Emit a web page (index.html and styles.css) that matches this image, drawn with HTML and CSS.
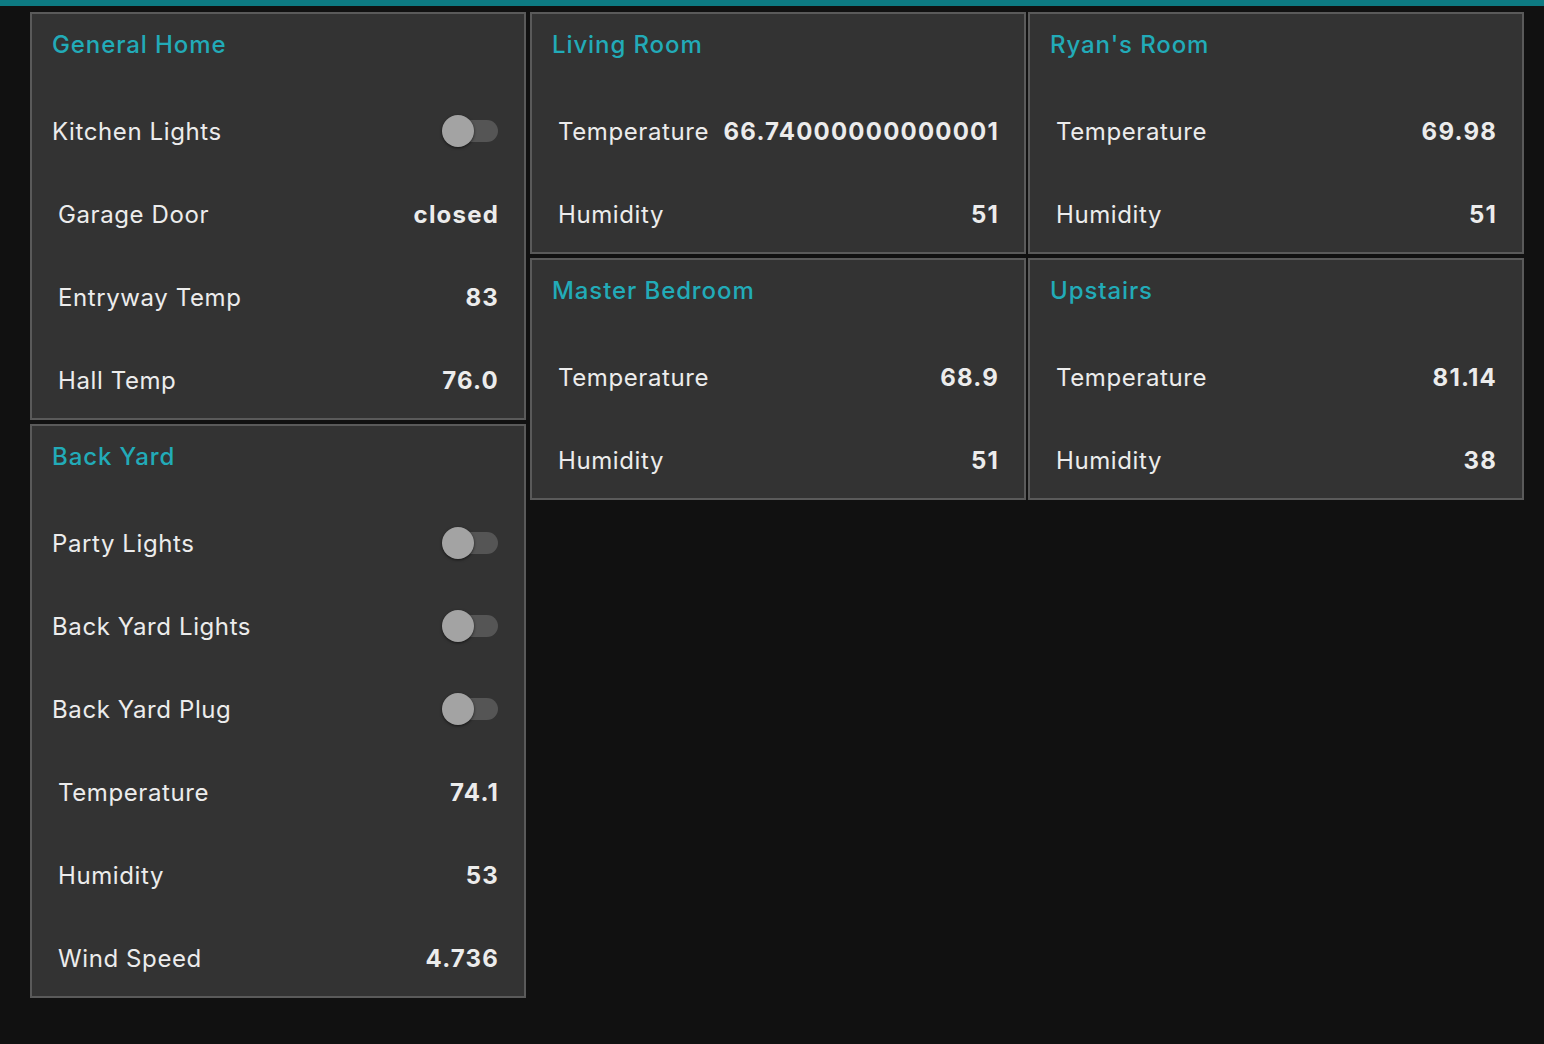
FILE: index.html
```html
<!DOCTYPE html>
<html lang="en">
<head>
  <meta charset="UTF-8">
  <meta name="viewport" content="width=device-width, initial-scale=1.0">
  <title>Home Dashboard</title>
  <link rel="stylesheet" href="styles.css">
</head>
<body>

  <div class="topbar"></div>

  <div class="layout">

    <!-- First column: house-wide group and back yard -->
    <div class="column">
      <div class="card">
        <div class="card-title">General Home</div>
        <div class="row switch-row">
          <span class="label">Kitchen Lights</span>
          <span class="switch"><span class="track"></span><span class="thumb"></span></span>
        </div>
        <div class="row text-row">
          <span class="label">Garage Door</span>
          <span class="value">closed</span>
        </div>
        <div class="row text-row">
          <span class="label">Entryway Temp</span>
          <span class="value">83</span>
        </div>
        <div class="row text-row">
          <span class="label">Hall Temp</span>
          <span class="value">76.0</span>
        </div>
      </div>

      <div class="card">
        <div class="card-title">Back Yard</div>
        <div class="row switch-row">
          <span class="label">Party Lights</span>
          <span class="switch"><span class="track"></span><span class="thumb"></span></span>
        </div>
        <div class="row switch-row">
          <span class="label">Back Yard Lights</span>
          <span class="switch"><span class="track"></span><span class="thumb"></span></span>
        </div>
        <div class="row switch-row">
          <span class="label">Back Yard Plug</span>
          <span class="switch"><span class="track"></span><span class="thumb"></span></span>
        </div>
        <div class="row text-row">
          <span class="label">Temperature</span>
          <span class="value">74.1</span>
        </div>
        <div class="row text-row">
          <span class="label">Humidity</span>
          <span class="value">53</span>
        </div>
        <div class="row text-row">
          <span class="label">Wind Speed</span>
          <span class="value">4.736</span>
        </div>
      </div>
    </div>

    <div class="column col-mid">
      <div class="card">
        <div class="card-title">Living Room</div>
        <div class="row text-row">
          <span class="label">Temperature</span>
          <span class="value">66.74000000000001</span>
        </div>
        <div class="row text-row">
          <span class="label">Humidity</span>
          <span class="value">51</span>
        </div>
      </div>

      <div class="card">
        <div class="card-title">Master Bedroom</div>
        <div class="row text-row">
          <span class="label">Temperature</span>
          <span class="value">68.9</span>
        </div>
        <div class="row text-row">
          <span class="label">Humidity</span>
          <span class="value">51</span>
        </div>
      </div>
    </div>

    <div class="column col-right">
      <div class="card">
        <div class="card-title">Ryan's Room</div>
        <div class="row text-row">
          <span class="label">Temperature</span>
          <span class="value">69.98</span>
        </div>
        <div class="row text-row">
          <span class="label">Humidity</span>
          <span class="value">51</span>
        </div>
      </div>

      <div class="card">
        <div class="card-title">Upstairs</div>
        <div class="row text-row">
          <span class="label">Temperature</span>
          <span class="value">81.14</span>
        </div>
        <div class="row text-row">
          <span class="label">Humidity</span>
          <span class="value">38</span>
        </div>
      </div>
    </div>

  </div>

</body>
</html>
```

FILE: styles.css
```css
body {
  font-family: 'Inter', 'Noto Sans', sans-serif;
  background-color: #111111;
  color: #ececec;
  margin: 0;
  padding: 0;
  min-height: 100vh;
}

.topbar {
  height: 6px;
  background-color: #0d7a82;
}

.layout {
  display: flex;
  align-items: flex-start;
  padding: 6px 0 0 30px;
}

.column {
  display: flex;
  flex-direction: column;
  gap: 4px;
  width: 496px;
}

.col-mid {
  margin-left: 4px;
}

.col-right {
  margin-left: 2px;
}

.card {
  box-sizing: border-box;
  background-color: #333333;
  border: 2px solid #5a5a5a;
  padding: 0 0 1px;
  display: flex;
  flex-direction: column;
  gap: 9px;
}

.card-title {
  height: 62px;
  line-height: 62px;
  padding-left: 20px;
  margin-bottom: 9px;
  font-size: 24px;
  font-weight: 500;
  letter-spacing: 0.9px;
  color: #22abb8;
}

.row {
  height: 74px;
  display: flex;
  align-items: center;
  justify-content: space-between;
  padding: 0 26px 0 20px;
  font-size: 24px;
}

.label {
  letter-spacing: 0.6px;
}

.text-row .label {
  padding-left: 6px;
}

.value {
  font-weight: 700;
  letter-spacing: 1.2px;
  padding-left: 12px;
  margin-right: -1px;
}

/* toggle switch, off state */
.switch {
  position: relative;
  width: 56px;
  height: 32px;
}

.switch .track {
  position: absolute;
  left: 4px;
  right: 0;
  top: 5px;
  height: 22px;
  border-radius: 11px;
  background-color: #555555;
}

.switch .thumb {
  position: absolute;
  left: 0;
  top: 0;
  width: 32px;
  height: 32px;
  border-radius: 50%;
  background-color: #a3a3a3;
  box-shadow: 0 1px 3px rgba(0, 0, 0, 0.6);
}
```
